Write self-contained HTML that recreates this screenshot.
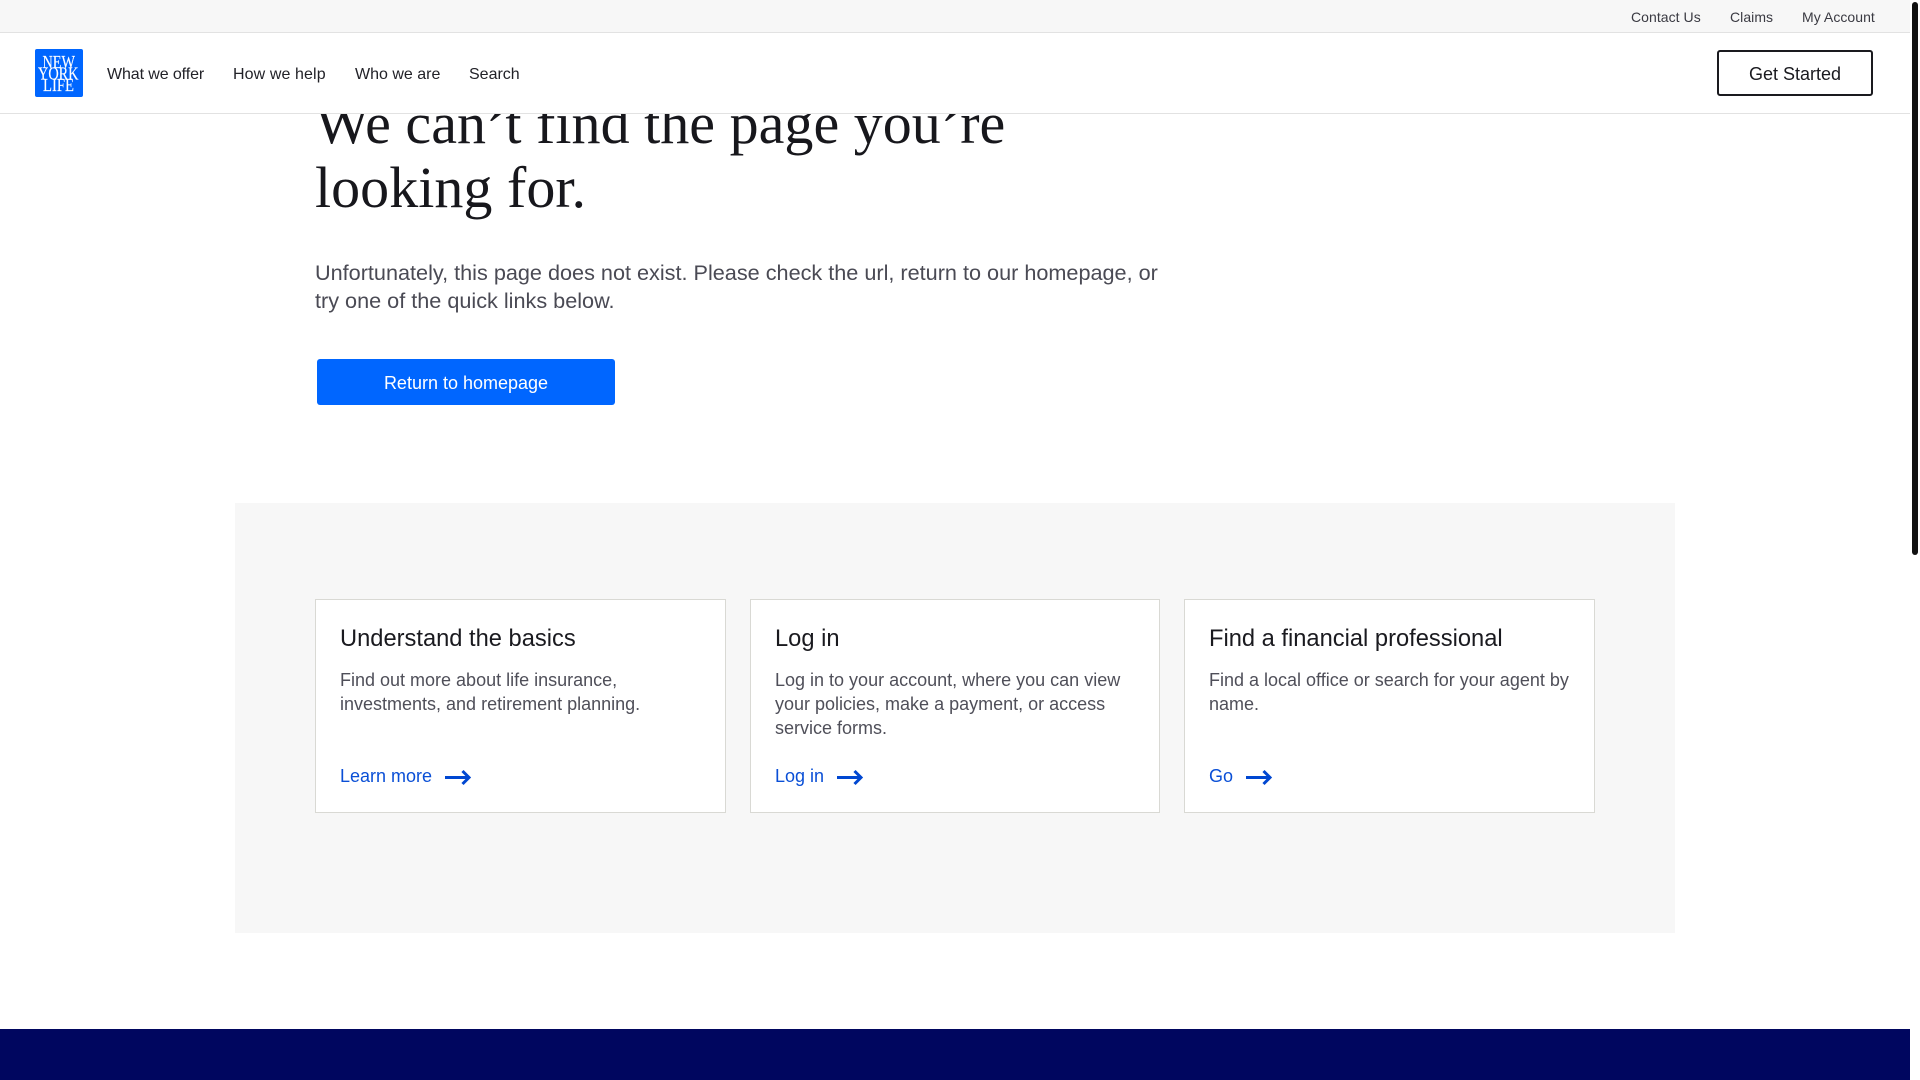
<!DOCTYPE html>
<html lang="en"><head><meta charset="utf-8"><title>New York Life</title>
<style>
html,body{margin:0;padding:0;width:1920px;height:1080px;overflow:hidden;background:#fff}
body{position:relative;font-family:"Liberation Sans",sans-serif;color:#1a1a1f}
.a{position:absolute;white-space:nowrap}
a{color:inherit;text-decoration:none}
.top{left:0;top:0;width:1910px;height:32px;background:#f7f7f7;border-bottom:1px solid #e2e2e2}
.nav{left:0;top:33px;width:1910px;height:80px;background:#fff;border-bottom:1px solid #e2e2e2;box-sizing:content-box}
.t{font-size:14px;line-height:20px;top:7px;color:#3a3a42;letter-spacing:.05px}
.n{font-size:16px;line-height:24px;top:63px;color:#222228}
h1{margin:0;font:400 58px/64px "Liberation Serif",serif;color:#17171c;left:315px;top:92px;letter-spacing:.03px}
h1 span{position:relative;top:10px}
.p{font-size:21.65px;line-height:28px;color:#4a4a54;left:315px;top:259px}
.btn{left:317px;top:359px;width:298px;height:46px;background:#0066ff;border-radius:3px;color:#fff;font-size:18px;line-height:48px;text-align:center}
.panel{left:235px;top:503px;width:1440px;height:430px;background:#f7f7f7}
.card{top:599px;height:214px;width:410.67px;box-sizing:border-box;background:#fff;border:1px solid #d9d9d4}
.h{font-size:23.7px;line-height:32px;top:623px;color:#1a1a1f}
.b{font-size:18px;line-height:24px;top:668px;color:#4f4f59}
.l{font-size:18px;line-height:24px;top:764px;color:#0a4fd6}
svg.ar{position:absolute;top:768px;width:28px;height:18px}
</style></head><body>
<div class="a panel"></div>
<h1 class="a">We can<span>´</span>t find the page you<span>´</span>re<br>looking for.</h1>
<div class="a p">Unfortunately, this page does not exist. Please check the url, return to our homepage, or<br>try one of the quick links below.</div>
<a class="a btn">Return to homepage</a>

<div class="a card" style="left:315px"></div>
<div class="a card" style="left:749.67px"></div>
<div class="a card" style="left:1184.33px"></div>

<div class="a h" style="left:340px">Understand the basics</div>
<div class="a b" style="left:340px">Find out more about life insurance,<br>investments, and retirement planning.</div>
<a class="a l" style="left:340px">Learn more</a>
<svg class="ar" style="left:444px" viewBox="0 0 28 18"><path d="M1 9.5H25M18.500 3l6.500 6.500-6.500 6.500" fill="none" stroke="#0047d1" stroke-width="3"/></svg>

<div class="a h" style="left:775px">Log in</div>
<div class="a b" style="left:775px">Log in to your account, where you can view<br>your policies, make a payment, or access<br>service forms.</div>
<a class="a l" style="left:775px">Log in</a>
<svg class="ar" style="left:836px" viewBox="0 0 28 18"><path d="M1 9.5H25M18.500 3l6.500 6.500-6.500 6.500" fill="none" stroke="#0047d1" stroke-width="3"/></svg>

<div class="a h" style="left:1209px">Find a financial professional</div>
<div class="a b" style="left:1209px">Find a local office or search for your agent by<br>name.</div>
<a class="a l" style="left:1209px">Go</a>
<svg class="ar" style="left:1245px" viewBox="0 0 28 18"><path d="M1 9.5H25M18.500 3l6.500 6.500-6.500 6.500" fill="none" stroke="#0047d1" stroke-width="3"/></svg>

<div class="a" style="left:0;top:1029px;width:1910px;height:51px;background:#00065f"></div>

<div class="a nav"></div>
<div class="a top"></div>
<a class="a t" style="left:1631px">Contact Us</a>
<a class="a t" style="left:1730px">Claims</a>
<a class="a t" style="left:1802px">My Account</a>

<svg class="a" style="left:35px;top:49px" width="48" height="48" viewBox="0 0 48 48">
<rect width="48" height="48" rx="2" fill="#0066ff"/>
<g fill="#fff" stroke="#fff" stroke-width=".15" font-family="Liberation Serif,serif" font-size="18">
<text x="7.500" y="19" textLength="32.500" lengthAdjust="spacingAndGlyphs">NEW</text>
<text x="3" y="30.500" textLength="40.500" lengthAdjust="spacingAndGlyphs">YORK</text>
<text x="8" y="42" textLength="31" lengthAdjust="spacingAndGlyphs">LIFE</text>
</g></svg>
<a class="a n" style="left:107px;letter-spacing:-.1px">What we offer</a>
<a class="a n" style="left:233px;letter-spacing:.1px">How we help</a>
<a class="a n" style="left:355px">Who we are</a>
<a class="a n" style="left:469px">Search</a>
<a class="a" style="left:1717px;top:50px;width:156px;height:46px;box-sizing:border-box;border:2px solid #1a1a1f;border-radius:3px;text-align:center;font-size:18px;line-height:44px;color:#1a1a1f">Get Started</a>

<div class="a" style="left:1912px;top:2px;width:6px;height:553px;background:#111;border-radius:3px"></div>
</body></html>
